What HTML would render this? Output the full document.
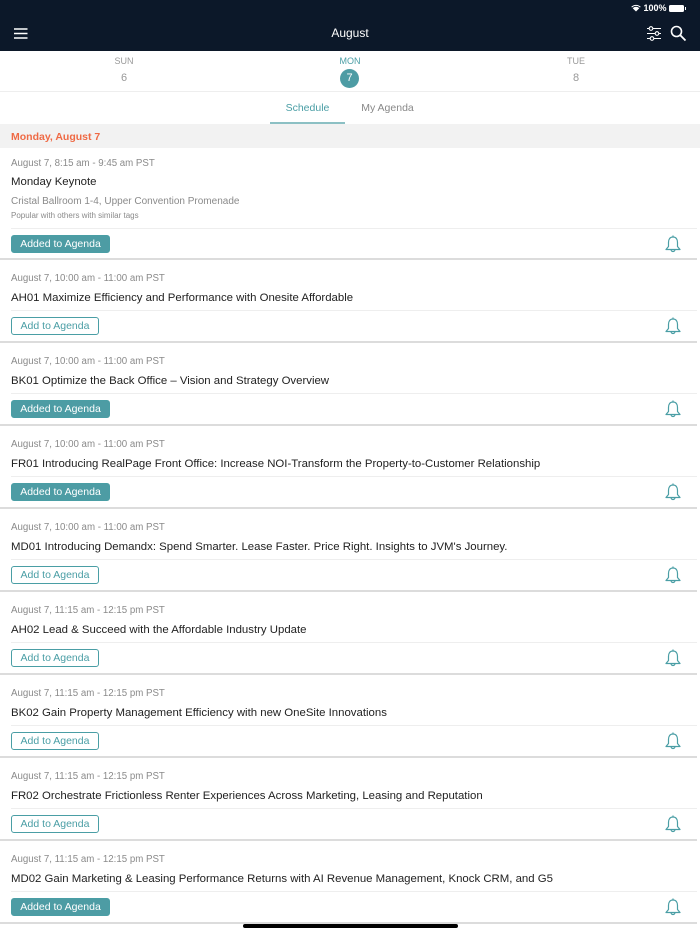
<!DOCTYPE html>
<html><head><meta charset="utf-8"><style>
*{margin:0;padding:0;box-sizing:border-box}
body{width:700px;height:934px;overflow:hidden;background:#fff;font-family:"Liberation Sans",sans-serif;position:relative}
.hdr{position:absolute;left:0;top:0;width:700px;height:51px;background:#0c1829;color:#fff}
.abs{position:absolute}
.days{position:absolute;top:51px;left:0;width:700px;height:41px;border-bottom:1px solid #eee}
.day{position:absolute;width:60px;text-align:center;color:#999;font-size:9px}
.tabs{position:absolute;top:92px;height:32px;width:700px}
.sec{position:absolute;top:124px;height:24px;width:700px;background:#f2f2f2;color:#ef6a45;font-weight:bold;font-size:10.5px;padding:7px 11px}
.card{position:absolute;left:0;width:697px;background:#fff;border-bottom:2px solid #dcdcdc}
.dt{position:absolute;left:11px;font-size:9.7px;color:#8a8a8a}
.tt{position:absolute;left:11px;font-size:11.4px;color:#222}
.dv{position:absolute;left:11px;right:0;height:1px;background:#eee}
.btn{position:absolute;left:11px;height:18px;width:88px;border:1px solid #4a9ea5;border-radius:3px;font-size:10.5px;text-align:center;line-height:16px;color:#4a9ea5}
.btn.on{background:#4d9ca4;color:#fff;width:99px}
.bell{position:absolute;left:664px}
</style></head><body>
<div class="hdr">
<div class="abs" style="right:14px;top:3px;font-size:9px;font-weight:bold">
<svg width="10" height="8" viewBox="0 0 10 8" style="vertical-align:-1px"><path d="M5 7.5L1.7 4.2A4.6 4.6 0 0 1 8.3 4.2Z M0.3 2.8A6.6 6.6 0 0 1 9.7 2.8L9 3.5A5.6 5.6 0 0 0 1 3.5Z" fill="#fff"/></svg> 100% <span style="display:inline-block;width:15px;height:7px;background:#fff;border-radius:1.5px;vertical-align:-1px"></span><span style="display:inline-block;width:1px;height:3px;background:#fff;vertical-align:1px;margin-left:1px"></span></div>
<svg class="abs" style="left:14px;top:28px" width="14" height="11"><path d="M0 1H13.5M0 5.5H13.5M0 10H13.5" stroke="#fff" stroke-width="1.4"/></svg>
<div class="abs" style="left:0;width:700px;top:26px;text-align:center;font-size:12px">August</div>
<svg class="abs" style="left:646px;top:26px" width="16" height="15"><g stroke="#fff" stroke-width="1.1" fill="none"><path d="M1 2.5H15M1 7.5H15M1 12.5H15"/><circle cx="5" cy="2.5" r="1.8" fill="#0c1829"/><circle cx="11" cy="7.5" r="1.8" fill="#0c1829"/><circle cx="6" cy="12.5" r="1.8" fill="#0c1829"/></g></svg>
<svg class="abs" style="left:670px;top:25px" width="17" height="17"><circle cx="6.5" cy="6.5" r="5" stroke="#fff" stroke-width="1.6" fill="none"/><path d="M10.3 10.3L15.5 15.5" stroke="#fff" stroke-width="1.8"/></svg>
</div>
<div class="days">
<div class="day" style="left:94px;top:5px">SUN</div><div class="day" style="left:94px;top:21px;font-size:11px">6</div>
<div class="day" style="left:320px;top:5px;color:#4a9ea5">MON</div>
<div class="abs" style="left:340px;top:18px;width:19px;height:19px;border-radius:50%;background:#4d9ca4;color:#fff;font-size:11px;text-align:center;line-height:19px">7</div>
<div class="day" style="left:546px;top:5px">TUE</div><div class="day" style="left:546px;top:21px;font-size:11px">8</div>
</div>
<div class="tabs">
<div class="abs" style="left:270px;width:75px;top:10px;text-align:center;font-size:10.5px;color:#4a9ea5">Schedule</div>
<div class="abs" style="left:270px;width:75px;top:30px;height:2px;background:#8cc0c4"></div>
<div class="abs" style="left:355px;width:65px;top:10px;text-align:center;font-size:10.5px;color:#888">My Agenda</div>
</div>
<div class="sec">Monday, August 7</div>

<div class="card" style="top:148px;height:112px">
<div class="dt" style="top:10px">August 7, 8:15 am - 9:45 am PST</div>
<div class="tt" style="top:28px">Monday Keynote</div>
<div class="dt" style="top:48px;font-size:10px">Cristal Ballroom 1-4, Upper Convention Promenade</div>
<div class="dt" style="top:63px;font-size:8px">Popular with others with similar tags</div>
<div class="dv" style="top:80px"></div>
<div class="btn on" style="top:87px">Added to Agenda</div>
<svg class="bell" style="top:86px" width="18" height="20" viewBox="0 0 18 20"><path d="M9 1.5V3M9 3C5.8 3 4.5 5.5 4.5 8.5V12.5L2 15.5H16L13.5 12.5V8.5C13.5 5.5 12.2 3 9 3ZM7 15.5A2 2 0 0 0 11 15.5" stroke="#4a9ea5" stroke-width="1.2" fill="none" stroke-linejoin="round"/></svg>
</div>

<div id="list"></div>
<div class="abs" style="left:243px;top:924px;width:215px;height:4px;border-radius:2px;background:#000"></div>
<script>
var items=[
["August 7, 10:00 am - 11:00 am PST","AH01 Maximize Efficiency and Performance with Onesite Affordable",0],
["August 7, 10:00 am - 11:00 am PST","BK01 Optimize the Back Office – Vision and Strategy Overview",1],
["August 7, 10:00 am - 11:00 am PST","FR01 Introducing RealPage Front Office: Increase NOI-Transform the Property-to-Customer Relationship",1],
["August 7, 10:00 am - 11:00 am PST","MD01 Introducing Demandx: Spend Smarter. Lease Faster. Price Right. Insights to JVM's Journey.",0],
["August 7, 11:15 am - 12:15 pm PST","AH02 Lead &amp; Succeed with the Affordable Industry Update",0],
["August 7, 11:15 am - 12:15 pm PST","BK02 Gain Property Management Efficiency with new OneSite Innovations",0],
["August 7, 11:15 am - 12:15 pm PST","FR02 Orchestrate Frictionless Renter Experiences Across Marketing, Leasing and Reputation",0],
["August 7, 11:15 am - 12:15 pm PST","MD02 Gain Marketing &amp; Leasing Performance Returns with AI Revenue Management, Knock CRM, and G5",1]];
var h="";
items.forEach(function(it,k){var t=260+83*k;
h+='<div class="card" style="top:'+t+'px;height:83px"><div class="dt" style="top:13px">'+it[0]+'</div><div class="tt" style="top:32px">'+it[1]+'</div><div class="dv" style="top:50px"></div>'+
(it[2]?'<div class="btn on" style="top:57px">Added to Agenda</div>':'<div class="btn" style="top:57px">Add to Agenda</div>')+
'<svg class="bell" style="top:56px" width="18" height="20" viewBox="0 0 18 20"><path d="M9 1.5V3M9 3C5.8 3 4.5 5.5 4.5 8.5V12.5L2 15.5H16L13.5 12.5V8.5C13.5 5.5 12.2 3 9 3ZM7 15.5A2 2 0 0 0 11 15.5" stroke="#4a9ea5" stroke-width="1.2" fill="none" stroke-linejoin="round"/></svg></div>';});
document.getElementById("list").innerHTML=h;
</script>
</body></html>
